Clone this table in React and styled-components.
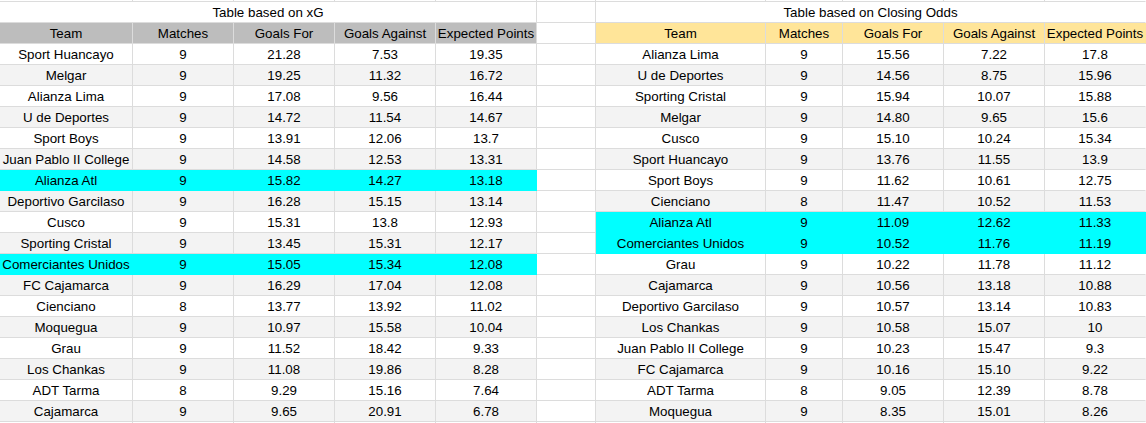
import React from "react";
import styled, { createGlobalStyle } from "styled-components";

const Global = createGlobalStyle`
  html, body { margin: 0; padding: 0; background: #ffffff; }
  body { font-family: "Liberation Sans", Arial, sans-serif; }
`;

const GRID = "#dcdcdc";

const Sheet = styled.div`
  display: grid;
  grid-template-columns: 133px repeat(4, 101px) 59px 170px 77px repeat(3, 101px);
  grid-template-rows: 2px;
  grid-auto-rows: 21px;
  width: 1146px;
  overflow: hidden;
  font-family: "Liberation Sans", Arial, sans-serif;
  font-size: 13.33px;
  color: #000;
`;

const Cell = styled.div`
  box-sizing: border-box;
  display: flex;
  align-items: center;
  justify-content: center;
  white-space: nowrap;
  overflow: hidden;
  background: ${(p) => p.$bg || "#ffffff"};
  border-bottom: 1px solid ${(p) => (p.$fill ? p.$bg : GRID)};
  border-right: 1px solid ${(p) => (p.$last ? "transparent" : p.$fill ? p.$bg : GRID)};
  grid-column: span ${(p) => p.$span || 1};
`;

const Title = styled(Cell)`
  padding-top: 0;
`;

const HEADERS = ["Team", "Matches", "Goals For", "Goals Against", "Expected Points"];

const LEFT = [
  ["Sport Huancayo", "9", "21.28", "7.53", "19.35"],
  ["Melgar", "9", "19.25", "11.32", "16.72"],
  ["Alianza Lima", "9", "17.08", "9.56", "16.44"],
  ["U de Deportes", "9", "14.72", "11.54", "14.67"],
  ["Sport Boys", "9", "13.91", "12.06", "13.7"],
  ["Juan Pablo II College", "9", "14.58", "12.53", "13.31"],
  ["Alianza Atl", "9", "15.82", "14.27", "13.18", true],
  ["Deportivo Garcilaso", "9", "16.28", "15.15", "13.14"],
  ["Cusco", "9", "15.31", "13.8", "12.93"],
  ["Sporting Cristal", "9", "13.45", "15.31", "12.17"],
  ["Comerciantes Unidos", "9", "15.05", "15.34", "12.08", true],
  ["FC Cajamarca", "9", "16.29", "17.04", "12.08"],
  ["Cienciano", "8", "13.77", "13.92", "11.02"],
  ["Moquegua", "9", "10.97", "15.58", "10.04"],
  ["Grau", "9", "11.52", "18.42", "9.33"],
  ["Los Chankas", "9", "11.08", "19.86", "8.28"],
  ["ADT Tarma", "8", "9.29", "15.16", "7.64"],
  ["Cajamarca", "9", "9.65", "20.91", "6.78"],
];

const RIGHT = [
  ["Alianza Lima", "9", "15.56", "7.22", "17.8"],
  ["U de Deportes", "9", "14.56", "8.75", "15.96"],
  ["Sporting Cristal", "9", "15.94", "10.07", "15.88"],
  ["Melgar", "9", "14.80", "9.65", "15.6"],
  ["Cusco", "9", "15.10", "10.24", "15.34"],
  ["Sport Huancayo", "9", "13.76", "11.55", "13.9"],
  ["Sport Boys", "9", "11.62", "10.61", "12.75"],
  ["Cienciano", "8", "11.47", "10.52", "11.53"],
  ["Alianza Atl", "9", "11.09", "12.62", "11.33", true],
  ["Comerciantes Unidos", "9", "10.52", "11.76", "11.19", true],
  ["Grau", "9", "10.22", "11.78", "11.12"],
  ["Cajamarca", "9", "10.56", "13.18", "10.88"],
  ["Deportivo Garcilaso", "9", "10.57", "13.14", "10.83"],
  ["Los Chankas", "9", "10.58", "15.07", "10"],
  ["Juan Pablo II College", "9", "10.23", "15.47", "9.3"],
  ["FC Cajamarca", "9", "10.16", "15.10", "9.22"],
  ["ADT Tarma", "8", "9.05", "12.39", "8.78"],
  ["Moquegua", "9", "8.35", "15.01", "8.26"],
];

const HIGHLIGHT = "#00ffff";
const ALT = "#f3f3f3";

function rowBg(row, i) {
  if (row[5]) return HIGHLIGHT;
  return i % 2 === 1 ? ALT : "#ffffff";
}

function TableCells({ row, index, last }) {
  const bg = rowBg(row, index);
  const fill = !!row[5];
  return row.slice(0, 5).map((v, c) => (
    <Cell key={c} $bg={bg} $fill={fill} $last={last && c === 4}>
      {v}
    </Cell>
  ));
}

function EmptyRow({ k }) {
  return Array.from({ length: 11 }, (_, c) => (
    <Cell key={`${k}-${c}`} $last={c === 10} />
  ));
}

export default function App() {
  return (
    <>
      <Global />
      <Sheet>
        <EmptyRow k="top" />

        <Title $span={5}>Table based on xG</Title>
        <Cell />
        <Title $span={5} $last>Table based on Closing Odds</Title>

        {HEADERS.map((h) => (
          <Cell key={`lh-${h}`} $bg="#bdbdbd">{h}</Cell>
        ))}
        <Cell />
        {HEADERS.map((h, c) => (
          <Cell key={`rh-${h}`} $bg="#ffe599" $last={c === 4}>{h}</Cell>
        ))}

        {LEFT.map((row, i) => (
          <React.Fragment key={i}>
            <TableCells row={row} index={i} />
            <Cell />
            <TableCells row={RIGHT[i]} index={i} last />
          </React.Fragment>
        ))}

        <EmptyRow k="bottom" />
      </Sheet>
    </>
  );
}
